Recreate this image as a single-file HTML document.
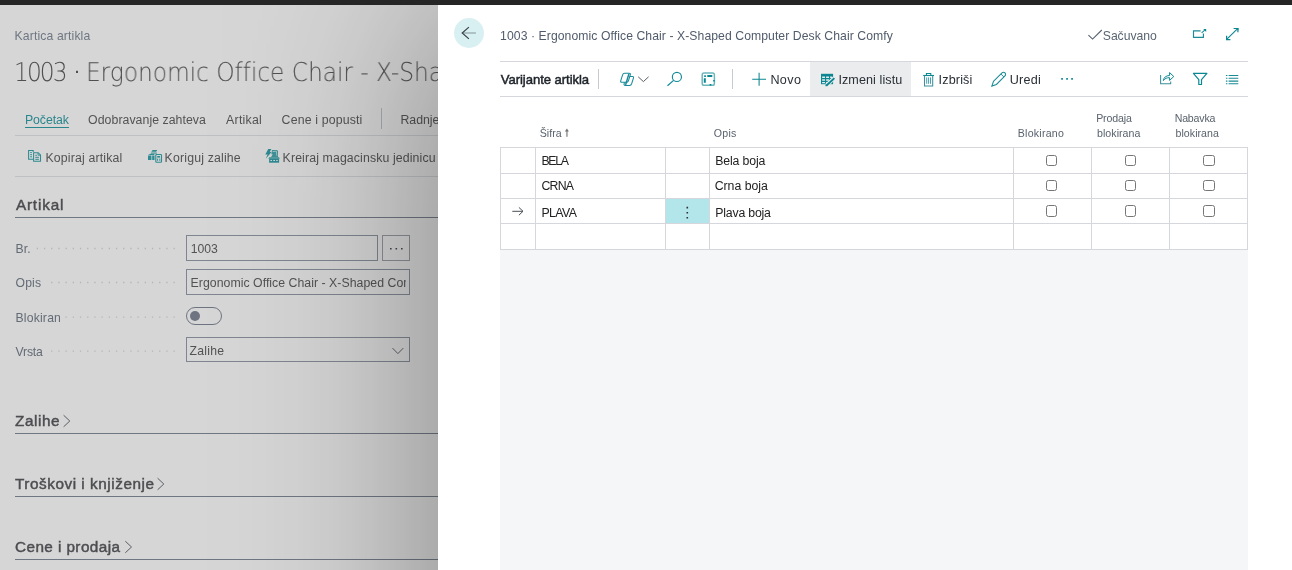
<!DOCTYPE html>
<html lang="sr">
<head>
<meta charset="utf-8">
<title>Varijante artikla</title>
<style>
html,body{margin:0;padding:0;}
body{width:1292px;height:570px;overflow:hidden;background:#fff;position:relative;font-family:"Liberation Sans",sans-serif;}
.abs,.t,.ln,.bx{position:absolute;}
.t{white-space:pre;}
#topbar{position:absolute;left:0;top:0;width:1292px;height:5px;background:#262626;z-index:10;}
#left{position:absolute;left:0;top:0;width:438px;height:570px;background:#d6d6d6;overflow:hidden;}
#right{position:absolute;left:438px;top:5px;width:854px;height:1300px;background:#fff;box-shadow:0 0 190px rgba(0,0,0,.40);}
#rc{position:absolute;left:-438px;top:-5px;width:1292px;height:570px;}
.ln{background:#c3c5c9;height:1px;}
.hl{background:#d5d7dd;}
svg{position:absolute;overflow:visible;}
#ltext{position:absolute;left:0;top:0;width:438px;height:570px;will-change:transform;}
.cb{width:9.6px;height:9.6px;border:1px solid #767676;border-radius:2.5px;background:#fff;}
</style>
</head>
<body>
<div id="left">
<!-- lines -->
<div class="ln" style="left:15px;top:135px;width:423px;background:#bfc0c2;"></div>
<div class="ln" style="left:15px;top:176px;width:423px;background:#bfc0c2;"></div>
<div class="ln" style="left:381px;top:108px;width:1px;height:21px;background:#a9abae;"></div>
<div class="ln" style="left:25px;top:126.6px;width:44px;height:1.4px;background:#2a868d;"></div>
<div class="ln" style="left:15px;top:217px;width:423px;background:#6f7783;"></div>
<div class="ln" style="left:15px;top:433px;width:423px;background:#6f7783;"></div>
<div class="ln" style="left:15px;top:496px;width:423px;background:#6f7783;"></div>
<div class="ln" style="left:15px;top:559px;width:423px;background:#6f7783;"></div>
<!-- inputs -->
<div class="bx" style="left:186px;top:235px;width:190px;height:24px;border:1px solid #7f8691;"></div>
<div class="bx" style="left:382px;top:235px;width:26px;height:24px;border:1px solid #8c8f95;"></div>
<div class="bx" style="left:186px;top:269px;width:222px;height:24px;border:1px solid #7f8691;overflow:hidden;"></div>
<div class="bx" style="left:186px;top:307px;width:34px;height:16px;border:1px solid #6e7580;border-radius:9px;"></div>
<div class="bx" style="left:190px;top:311.4px;width:10px;height:10px;border-radius:5px;background:#6e7580;"></div>
<div class="bx" style="left:186px;top:337px;width:222px;height:23px;border:1px solid #7f8691;"></div>
<svg width="438" height="570" viewBox="0 0 438 570" style="left:0;top:0;" fill="none">
<!-- dotted leaders -->
<g stroke="#b3b5b9" stroke-width="1.3" stroke-dasharray="1.3 5.9">
<path d="M36.7 248.5H175.2"/>
<path d="M51.1 282.5H175.2"/>
<path d="M65.5 317.1H175.2"/>
<path d="M51.1 351.1H175.2"/>
</g>
<!-- copy icon -->
<path d="M33.3 159.2H28.6V150.4H33.2V152" stroke="#2f8a91" stroke-width="1.05"/>
<path d="M30.2 152.6h1.6 M30.2 154.7h1.8 M30.2 156.8h1.8" stroke="#2f8a91" stroke-width="1"/>
<path d="M33.6 152.7h4.6l2.3 2.3v6.3h-6.9Z" stroke="#2f8a91" stroke-width="1.05"/>
<path d="M38 152.9v2.3h2.3" stroke="#2f8a91" stroke-width=".9"/>
<path d="M35.3 155.3h1.6 M35.3 157.3h3.6 M35.3 159.3h3.6" stroke="#2f8a91" stroke-width="1"/>
<!-- adjust inventory icon -->
<path d="M152.6 150h4.6l-1 1.8h-4.8Z" fill="#2f8a91"/>
<path d="M151.2 152.4h5.6v1.4h-6.4Z" fill="#2f8a91" fill-opacity=".85"/>
<path d="M148 154.9l2-1h4.3v1Z" fill="#2f8a91"/>
<path d="M148 155.6h3.4v4.4h-3.4Z M152.2 155.6h2.3v4.4h-2.3Z" fill="#2f8a91"/>
<rect x="155.8" y="154.5" width="5.7" height="7.8" rx=".8" stroke="#2f8a91" stroke-width="1.1" fill="#d6d6d6"/>
<path d="M157.2 156h2.9v1.6h-2.9Z" fill="#2f8a91"/>
<path d="M157.6 158.6v2.3 M159.8 158.6v2.3" stroke="#2f8a91" stroke-width=".9"/>
<!-- create SKU icon -->
<path d="M268.2 149.1h3.2l-1.6 3h1.8l-5.8 6.7 1.8-4.4h-2.3Z" fill="#2f8a91"/>
<path d="M272 150h5.2l.8 1.2v5.7h-6.9l1.6-2.6h-1.3Z" fill="#2f8a91" fill-opacity=".9"/>
<path d="M272.6 151.6l3.8-.4.4 4.6" stroke="#c9d3d4" stroke-width=".7"/>
<path d="M268.3 158.8l1-1.6h9.6l1 1.6Z" fill="#2f8a91"/>
<path d="M269.1 158.8h10v3.9h-10Z" fill="#2f8a91"/>
<path d="M270.5 159.9h1.5v1.1h-1.5Z M273.3 159.9h1.7v1.1h-1.7Z M276.2 159.9h1.5v1.1h-1.5Z" fill="#d3dcdd"/>
<!-- lookup dots -->
<path d="M390 248h1.6v1.6h-1.6Z M395.5 248h1.6v1.6h-1.6Z M401 248h1.6v1.6h-1.6Z" fill="#43474d"/>
<!-- select chevron -->
<path d="M392.5 348.1L397.9 353.6L403.3 348.1" stroke="#5b6068" stroke-width="1"/>
<!-- section chevrons -->
<path d="M63.6 415.2L69.8 421L63.6 426.8" stroke="#5a5d62" stroke-width="1"/>
<path d="M157.6 478.2L163.8 484L157.6 489.8" stroke="#5a5d62" stroke-width="1"/>
<path d="M125.3 541.2L131.5 547L125.3 552.8" stroke="#5a5d62" stroke-width="1"/>
</svg>

<div id="ltext">
<span class="t" style="left:14.6px;top:28.0px;font-size:12.2px;line-height:16px;letter-spacing:0.129px;color:#6e7782;">Kartica artikla</span>
<span class="t" style="left:13.9px;top:57.0px;font-size:25.9px;line-height:32px;letter-spacing:-2.132px;color:#505050;font-weight:200;text-rendering:geometricPrecision;font-family:'DejaVu Sans Light','DejaVu Sans',sans-serif;transform-origin:0 0;transform:scaleX(0.9);">1003</span>
<span class="t" style="left:73.5px;top:57.0px;font-size:21px;line-height:25px;letter-spacing:-0.600px;color:#505050;">·</span>
<span class="t" style="left:86.1px;top:57.0px;font-size:25.9px;line-height:32px;letter-spacing:-0.038px;color:#505050;font-weight:200;text-rendering:geometricPrecision;font-family:'DejaVu Sans Light','DejaVu Sans',sans-serif;transform-origin:0 0;transform:scaleX(0.9);">Ergonomic Office Chair - X-Shaped Computer Desk Chair Comfy</span>
<span class="t" style="left:24.9px;top:112.0px;font-size:12.3px;line-height:16px;letter-spacing:-0.064px;color:#2a868d;">Početak</span>
<span class="t" style="left:88.1px;top:112.0px;font-size:12.3px;line-height:16px;letter-spacing:0.051px;color:#535353;">Odobravanje zahteva</span>
<span class="t" style="left:226.1px;top:112.0px;font-size:12.3px;line-height:16px;letter-spacing:0.258px;color:#535353;">Artikal</span>
<span class="t" style="left:281.6px;top:112.0px;font-size:12.3px;line-height:16px;letter-spacing:0.161px;color:#535353;">Cene i popusti</span>
<span class="t" style="left:400.5px;top:112.0px;font-size:12.3px;line-height:16px;letter-spacing:-0.026px;color:#535353;">Radnje</span>
<span class="t" style="left:45.5px;top:150.0px;font-size:12.3px;line-height:16px;letter-spacing:0.158px;color:#535353;">Kopiraj artikal</span>
<span class="t" style="left:164.6px;top:150.0px;font-size:12.3px;line-height:16px;letter-spacing:0.174px;color:#535353;">Koriguj zalihe</span>
<span class="t" style="left:282.6px;top:150.0px;font-size:12.3px;line-height:16px;letter-spacing:0.126px;color:#535353;">Kreiraj magacinsku jedinicu</span>
<span class="t" style="left:15.9px;top:195.0px;font-size:15.3px;line-height:19px;letter-spacing:0.840px;color:#4c4d50;-webkit-text-stroke:0.45px #4c4d50;">Artikal</span>
<span class="t" style="left:15.4px;top:241.0px;font-size:12.2px;line-height:16px;letter-spacing:0.193px;color:#636b76;">Br.</span>
<span class="t" style="left:15.6px;top:275.0px;font-size:12.2px;line-height:16px;letter-spacing:0.118px;color:#636b76;">Opis</span>
<span class="t" style="left:15.4px;top:310.0px;font-size:12.2px;line-height:16px;letter-spacing:0.210px;color:#636b76;">Blokiran</span>
<span class="t" style="left:15.6px;top:344.0px;font-size:12.2px;line-height:16px;letter-spacing:-0.194px;color:#636b76;">Vrsta</span>
<span class="t" style="left:190.7px;top:241.0px;font-size:12.2px;line-height:16px;letter-spacing:-0.031px;color:#535353;">1003</span>
<div class="bx" style="left:188px;top:0;width:218.1px;height:570px;overflow:hidden;"><span class="t" style="left:2.6px;top:275.0px;font-size:12.3px;line-height:16px;letter-spacing:0.028px;color:#535353;">Ergonomic Office Chair - X-Shaped Computer Desk Chair Comfy</span></div>
<span class="t" style="left:189.6px;top:343.0px;font-size:12.2px;line-height:16px;letter-spacing:0.273px;color:#535353;">Zalihe</span>
<span class="t" style="left:15.0px;top:411.0px;font-size:15.3px;line-height:19px;letter-spacing:0.581px;color:#4c4d50;-webkit-text-stroke:0.45px #4c4d50;">Zalihe</span>
<span class="t" style="left:15.0px;top:474.0px;font-size:15.3px;line-height:19px;letter-spacing:0.544px;color:#4c4d50;-webkit-text-stroke:0.45px #4c4d50;">Troškovi i knjiženje</span>
<span class="t" style="left:15.0px;top:537.0px;font-size:15.3px;line-height:19px;letter-spacing:0.425px;color:#4c4d50;-webkit-text-stroke:0.45px #4c4d50;">Cene i prodaja</span>
</div>
</div>
<div id="right"><div id="rc">
<div class="bx" style="left:454px;top:18px;width:30px;height:30px;border-radius:15px;background:#d9f0f2;"></div>
<div class="ln hl" style="left:500px;top:61px;width:748px;"></div>
<div class="ln hl" style="left:500px;top:96px;width:748px;"></div>
<div class="bx" style="left:810px;top:62px;width:101px;height:34px;background:#ebecee;"></div>
<div class="ln" style="left:598px;top:69px;width:1px;height:20px;background:#c8cad0;"></div>
<div class="ln" style="left:732px;top:69px;width:1px;height:20px;background:#c8cad0;"></div>
<!-- table -->
<div class="bx" style="left:500px;top:250px;width:748px;height:320px;background:#f5f6f8;"></div>
<div class="bx" style="left:666px;top:199px;width:43px;height:25px;background:#b3e6ea;"></div>
<div id="grid">
<div class="ln hl" style="left:500px;top:147px;width:748px;"></div>
<div class="ln hl" style="left:500px;top:173px;width:748px;"></div>
<div class="ln hl" style="left:500px;top:198px;width:748px;"></div>
<div class="ln hl" style="left:500px;top:223px;width:748px;"></div>
<div class="ln hl" style="left:500px;top:249px;width:748px;"></div>
<div class="ln hl" style="left:500px;top:147px;width:1px;height:103px;"></div>
<div class="ln hl" style="left:535px;top:147px;width:1px;height:103px;"></div>
<div class="ln hl" style="left:665px;top:147px;width:1px;height:103px;"></div>
<div class="ln hl" style="left:709px;top:147px;width:1px;height:103px;"></div>
<div class="ln hl" style="left:1013px;top:147px;width:1px;height:103px;"></div>
<div class="ln hl" style="left:1091px;top:147px;width:1px;height:103px;"></div>
<div class="ln hl" style="left:1169px;top:147px;width:1px;height:103px;"></div>
<div class="ln hl" style="left:1247px;top:147px;width:1px;height:103px;"></div>
</div>
<div id="checks">
<div class="bx cb" style="left:1045.9px;top:154.5px;"></div>
<div class="bx cb" style="left:1124.6px;top:154.5px;"></div>
<div class="bx cb" style="left:1203.2px;top:154.5px;"></div>
<div class="bx cb" style="left:1045.9px;top:179.9px;"></div>
<div class="bx cb" style="left:1124.6px;top:179.9px;"></div>
<div class="bx cb" style="left:1203.2px;top:179.9px;"></div>
<div class="bx cb" style="left:1045.9px;top:205.2px;"></div>
<div class="bx cb" style="left:1124.6px;top:205.2px;"></div>
<div class="bx cb" style="left:1203.2px;top:205.2px;"></div>
</div>
<svg width="1292" height="570" viewBox="0 0 1292 570" style="left:0;top:0;" fill="none" stroke-linecap="butt">
<!-- back arrow -->
<path d="M462.2 33H475.9" stroke="#8b9b9e" stroke-width="1.1"/>
<path d="M468.9 27.1L462.2 33L468.9 38.9" stroke="#3e454c" stroke-width="1.25"/>
<!-- checkmark saved -->
<path d="M1088.4 35.2L1092.6 39.1L1101.8 30" stroke="#566170" stroke-width="1.1"/>
<!-- popout -->
<path d="M1200.6 30.9H1193.5V37.4H1203.4V33.6" stroke="#1a8b94" stroke-width="1.15"/>
<path d="M1201.6 32.8L1205.4 29.6" stroke="#1a8b94" stroke-width="1.1"/>
<path d="M1203.2 29H1206.2V32Z" fill="#0b8791" stroke="none"/>
<!-- expand -->
<path d="M1226.9 39.2L1237.6 28.7" stroke="#0f8891" stroke-width="1.15"/>
<path d="M1233.6 28.5H1237.9V32.2" stroke="#0b8791" stroke-width="1.2"/>
<path d="M1226.6 35.8V39.6H1230.4" stroke="#0b8791" stroke-width="1.2"/>
<path d="M1236 28H1238.4V30.4Z M1226.1 37.7V40.1H1228.5Z" fill="#0b8791" stroke="none"/>
<!-- copilot -->
<path d="M624.6 73.3h4.6q1.5 0 1.1 1.5l-1.9 6q-.5 1.5-2 1.5h-4.6q-1.5 0-1.1-1.5l1.9-6q.5-1.5 2-1.5Z" stroke="#17899a" stroke-width="1.05"/>
<path d="M629.6 76.4h2.8q1.5 0 1.1 1.5l-1.9 6q-.5 1.5-2 1.5h-4.4q-1.5 0-1.1-1.5l.4-1.4" stroke="#17899a" stroke-width="1.05"/>
<path d="M628.9 73.9l-3.3 11" stroke="#17899a" stroke-width="1.5"/>
<!-- chevron small -->
<path d="M638.2 76.8L643.4 81.6L648.6 76.8" stroke="#5a5f66" stroke-width="1"/>
<!-- search -->
<circle cx="676.9" cy="76.9" r="4.55" stroke="#0f8a9a" stroke-width="1.15"/>
<path d="M673.6 80.4L667.5 85.7" stroke="#0f8a9a" stroke-width="1.25"/>
<!-- layout / personalize -->
<rect x="702.2" y="73.1" width="12.2" height="12.2" rx="1.8" stroke="#6db7bd" stroke-width="1.5"/>
<path d="M704.2 75.2h1.7v1.7h-1.7Z M707.3 75h5v2h-5Z M703.8 78.3h2v4.4h-2Z M713.2 80h1.6v1.6h-1.6Z M709.6 83.9h1.8v1.6h-1.8Z" fill="#0b8791" stroke="none"/>
<!-- plus -->
<path d="M752.2 79.3H766 M759.1 72.8V85.8" stroke="#0b8791" stroke-width="1.05"/>
<!-- edit list -->
<path d="M821 73.8h12.1v10.4h-12.1Z" fill="#0b8791" stroke="none"/>
<path d="M822.1 76.5h2.9v1.6h-2.9Z M826.1 76.5h2.9v1.6h-2.9Z M830.1 76.5h2v1.6h-2Z M822.1 79.2h2.9v1.6h-2.9Z M826.1 79.2h2.9v1.6h-2.9Z M830.1 79.2h2v1.6h-2Z M822.1 81.9h2.9v1.3h-2.9Z M826.1 81.9h2.9v1.3h-2.9Z M830.1 81.9h2v1.3h-2Z" fill="#e3ecee" stroke="none"/>
<path d="M834.3 77.9L826.6 85.1" stroke="#ebecee" stroke-width="3.8"/>
<path d="M834.4 78.1L826.2 85.7" stroke="#0b8791" stroke-width="1.9"/>
<path d="M825.4 86.3l.5-2 1.6 1.5Z" fill="#0b8791" stroke="none"/>
<!-- trash -->
<path d="M923.2 75.5H934" stroke="#0b8791" stroke-width="1.1"/>
<path d="M926.4 75.3V73.5H930.8V75.3" stroke="#0b8791" stroke-width="1.05"/>
<path d="M924.5 75.8V85.9H932.7V75.8" stroke="#3c8f9c" stroke-width="1.05"/>
<path d="M926.7 77.4V83.8 M928.6 77.4V83.8 M930.5 77.4V83.8" stroke="#3c98a8" stroke-width=".95"/>
<!-- pencil -->
<g transform="translate(998.6 79.3) rotate(45)" stroke="#1a8b94" stroke-width="1.05">
<path d="M-2.1 5.2V-6.9a2.1 2.1 0 0 1 4.2 0V5.2L0 9.6Z"/>
<path d="M-2.1 -5.4H2.1" stroke-width=".9"/>
</g>
<!-- ellipsis -->
<path d="M1061.2 78.1h1.7v1.7h-1.7Z M1066.2 78.1h1.7v1.7h-1.7Z M1071.2 78.1h1.7v1.7h-1.7Z" fill="#0b8791" stroke="none"/>
<!-- share -->
<path d="M1160.6 75V83.7H1170.7V81.4" stroke="#3c8f9c" stroke-width="1.05"/>
<path d="M1163.4 80.6c.4-3.4 2.6-5 6.2-5.1v-2.9l4.2 3.9-4.2 3.9v-2.7c-2.6-.1-4.6.6-6.2 2.9Z" stroke="#0f8891" stroke-width="1"/>
<!-- filter -->
<path d="M1193.4 73.4H1206.9L1201.5 79.6V84.5H1198.8V79.6Z" stroke="#0b8791" stroke-width="1.2" stroke-linejoin="round"/>
<!-- list -->
<path d="M1228.6 75.5H1238.3 M1228.6 78.2H1238.3 M1228.6 81.1H1238.3 M1228.6 83.7H1238.3" stroke="#1a8b94" stroke-width="1.05"/>
<path d="M1225.9 75.5H1227.4 M1225.9 78.2H1227.4 M1225.9 81.1H1227.4 M1225.9 83.7H1227.4" stroke="#1a8b94" stroke-width="1.05"/>
<!-- sort arrow -->
<path d="M566.9 136.8V130.5" stroke="#a9a9a9" stroke-width="1.9"/>
<path d="M564.9 131.5L566.9 128.4L568.9 131.5Z" fill="#747474" stroke="none"/>
<!-- row arrow -->
<path d="M512.3 211.3H522.8" stroke="#4a4f55" stroke-width="1"/>
<path d="M518.9 207.4L523 211.3L518.9 215.2" stroke="#4a4f55" stroke-width="1"/>
<!-- vertical dots -->
<path d="M686.5 206.8h1.6v1.6h-1.6Z M686.5 211.9h1.6v1.6h-1.6Z M686.5 217h1.6v1.6h-1.6Z" fill="#2a2f36" stroke="none"/>
</svg>

<span class="t" style="left:500.1px;top:28.0px;font-size:12.2px;line-height:16px;letter-spacing:0.074px;color:#505b6b;">1003 · Ergonomic Office Chair - X-Shaped Computer Desk Chair Comfy</span>
<span class="t" style="left:1102.8px;top:28.0px;font-size:12.2px;line-height:16px;letter-spacing:-0.044px;color:#5a6573;">Sačuvano</span>
<span class="t" style="left:500.8px;top:71.0px;font-size:13.1px;line-height:17px;letter-spacing:-0.061px;color:#1f242b;-webkit-text-stroke:0.5px #1f242b;">Varijante artikla</span>
<span class="t" style="left:770.4px;top:72.0px;font-size:12.6px;line-height:16px;letter-spacing:0.375px;color:#2a2f36;">Novo</span>
<span class="t" style="left:838.4px;top:72.0px;font-size:12.6px;line-height:16px;letter-spacing:0.083px;color:#2a2f36;">Izmeni listu</span>
<span class="t" style="left:938.6px;top:72.0px;font-size:12.6px;line-height:16px;letter-spacing:0.142px;color:#2a2f36;">Izbriši</span>
<span class="t" style="left:1009.7px;top:72.0px;font-size:12.6px;line-height:16px;letter-spacing:0.246px;color:#2a2f36;">Uredi</span>
<span class="t" style="left:539.7px;top:126.0px;font-size:10.6px;line-height:14px;letter-spacing:0.067px;color:#59626d;">Šifra</span>
<span class="t" style="left:713.7px;top:126.0px;font-size:10.6px;line-height:14px;letter-spacing:0.292px;color:#59626d;">Opis</span>
<span class="t" style="left:1017.8px;top:126.0px;font-size:10.6px;line-height:14px;letter-spacing:0.226px;color:#59626d;">Blokirano</span>
<span class="t" style="left:1096.2px;top:111.0px;font-size:10.6px;line-height:14px;letter-spacing:-0.134px;color:#59626d;">Prodaja</span>
<span class="t" style="left:1097.0px;top:126.0px;font-size:10.6px;line-height:14px;letter-spacing:0.048px;color:#59626d;">blokirana</span>
<span class="t" style="left:1174.7px;top:111.0px;font-size:10.6px;line-height:14px;letter-spacing:-0.183px;color:#59626d;">Nabavka</span>
<span class="t" style="left:1175.5px;top:126.0px;font-size:10.6px;line-height:14px;letter-spacing:0.048px;color:#59626d;">blokirana</span>
<span class="t" style="left:541.4px;top:153.0px;font-size:12.3px;line-height:16px;letter-spacing:-1.254px;color:#222;">BELA</span>
<span class="t" style="left:541.5px;top:178.0px;font-size:12.3px;line-height:16px;letter-spacing:-0.774px;color:#222;">CRNA</span>
<span class="t" style="left:541.4px;top:205.0px;font-size:12.3px;line-height:16px;letter-spacing:-0.535px;color:#222;">PLAVA</span>
<span class="t" style="left:715.3px;top:153.0px;font-size:12.3px;line-height:16px;letter-spacing:-0.152px;color:#222;">Bela boja</span>
<span class="t" style="left:714.7px;top:178.0px;font-size:12.3px;line-height:16px;letter-spacing:-0.020px;color:#222;">Crna boja</span>
<span class="t" style="left:715.3px;top:205.0px;font-size:12.3px;line-height:16px;letter-spacing:-0.203px;color:#222;">Plava boja</span>
</div></div>
<div id="topbar"></div>
</body>
</html>
